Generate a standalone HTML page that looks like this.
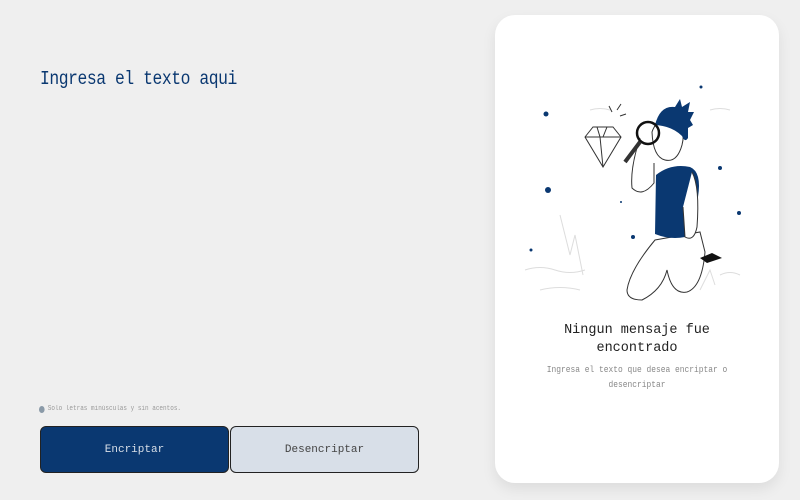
<!DOCTYPE html>
<html><head><style>
*{margin:0;padding:0;box-sizing:border-box}
body{width:800px;height:500px;background:#efefef;font-family:"Liberation Mono",monospace;position:relative;overflow:hidden}
.t{position:absolute;left:40px;top:68px;color:#0a3871;font-size:19px;letter-spacing:-0.5px;transform:scaleX(0.86);transform-origin:left}
.note{position:absolute;left:39px;top:405px;font-size:7.5px;color:#999;display:flex;align-items:center;gap:4px;transform:scaleX(0.8);transform-origin:left}
.note i{display:inline-block;width:7px;height:7px;border-radius:50%;background:#8a9aa8}
.b{position:absolute;top:426px;width:189px;height:47px;border-radius:6px;font-size:11px;display:flex;align-items:center;justify-content:center}
.b1{left:40px;background:#0a3871;color:#d8dfe8;border:1px solid #222}
.b2{left:230px;background:#d8dfe8;border:1.5px solid #222;color:#444}
.card{position:absolute;left:495px;top:15px;width:284px;height:468px;background:#fff;border-radius:20px;box-shadow:0 6px 14px rgba(0,0,0,.08)}
.h{position:absolute;left:495px;width:284px;top:322px;text-align:center;font-size:13.5px;color:#222;line-height:18px}
.p{position:absolute;left:495px;width:284px;top:363px;text-align:center;font-size:9px;color:#888;line-height:15px;transform:scaleX(0.88)}
</style></head><body>
<div class="t">Ingresa el texto aqui</div>
<div class="note"><i></i>Solo letras minúsculas y sin acentos.</div>
<div class="b b1">Encriptar</div>
<div class="b b2">Desencriptar</div>
<div class="card"></div>
<svg style="position:absolute;left:0;top:0" width="800" height="500">
<g fill="none" stroke="#ddd" stroke-width="1">
<path d="M525 270 q15 -5 30 0 t30 0"/><path d="M540 290 q20 -5 40 0"/><path d="M560 215 l10 40 l5 -20 l8 40"/><path d="M720 275 q10 -5 20 0"/><path d="M700 290 l10 -20 l5 15"/><path d="M590 110 q10 -3 20 0"/><path d="M710 110 q10 -3 20 0"/>
</g>
<g fill="#0a3871">
<circle cx="546" cy="114" r="2.5"/><circle cx="548" cy="190" r="3"/><circle cx="701" cy="87" r="1.5"/><circle cx="720" cy="168" r="2"/><circle cx="739" cy="213" r="2"/><circle cx="633" cy="237" r="2"/><circle cx="531" cy="250" r="1.5"/><circle cx="621" cy="202" r="1"/>
</g>
<g fill="none" stroke="#333" stroke-width="1">
<path d="M585 137 l8 -10 h20 l8 10 l-18 30 z M585 137 h36 M597 127 l3 10 l3 30 M607 127 l-4 10"/>
<path d="M612 112 l-3 -6 M617 110 l4 -6 M620 116 l6 -2"/>
</g>
<path d="M655 240 q-25 30 -28 50 q0 10 15 10 q20 -10 25 -30 q5 25 20 22 q15 -5 18 -40 l-5 -20 z" fill="#fff" stroke="#333"/>
<path d="M700 258 l12 -5 l10 5 l-15 5 z" fill="#111"/>
<path d="M640 138 q-10 30 -8 50 q10 10 22 -5 l0 -20" fill="#fff" stroke="#333"/>
<path d="M656 175 q15 -12 34 -8 q12 5 8 30 l-3 37 q-20 8 -40 0 z" fill="#0a3871"/>
<path d="M692 172 q8 15 5 55 q-3 15 -12 10 l-2 -30" fill="#fff" stroke="#333"/>
<path d="M652 132 q5 -15 20 -12 q15 5 10 25 q-5 18 -17 15 q-12 -3 -13 -28z" fill="#fff" stroke="#333"/>
<path d="M655 125 q5 -20 20 -18 l5 -8 l2 8 l8 -5 l-2 10 l6 0 l-4 8 l3 5 l-5 3 l0 10 q-3 5 -6 -2 q-10 -10 -27 -11z" fill="#0a3871"/>
<circle cx="648" cy="133" r="11" fill="none" stroke="#111" stroke-width="2.5"/>
<path d="M640 142 l-15 20" stroke="#333" stroke-width="4"/>
</svg>
<div class="h">Ningun mensaje fue<br>encontrado</div>
<div class="p">Ingresa el texto que desea encriptar o<br>desencriptar</div>
</body></html>
